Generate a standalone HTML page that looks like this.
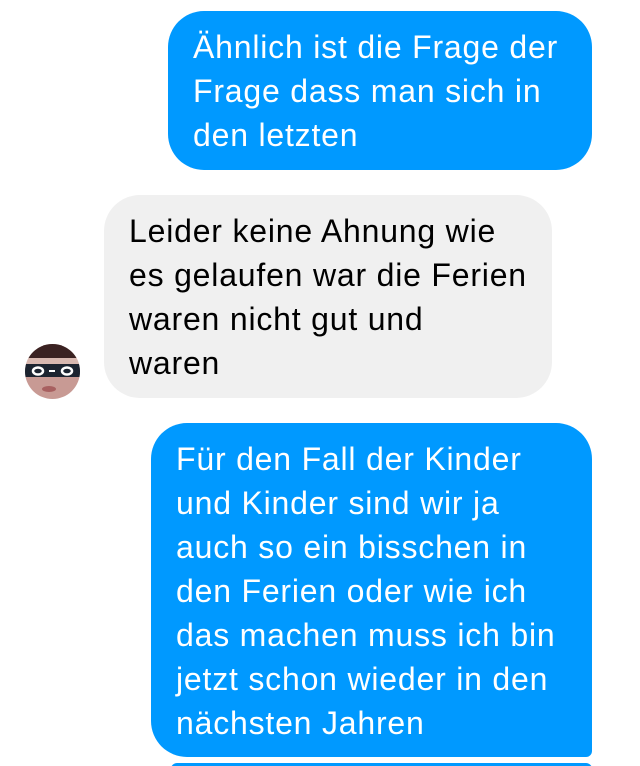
<!DOCTYPE html>
<html><head><meta charset="utf-8"><style>
html,body{margin:0;width:640px;height:766px;overflow:hidden;}
body{background:#fff;position:relative;font-family:"Liberation Sans",sans-serif;}
.b{position:absolute;box-sizing:border-box;font-size:32px;letter-spacing:0.8px;line-height:44px;padding:14px 0 0 25px;border-radius:36px;white-space:nowrap;}
.o{background:#0099ff;color:#fff;}
.i{background:#f0f0f0;color:#000;}
</style></head><body>
<div class="b o" style="left:168px;top:11px;width:424px;height:159px;">Ähnlich ist die Frage der<br>Frage dass man sich in<br>den letzten</div>
<div class="b i" style="left:104px;top:195px;width:448px;height:203px;">Leider keine Ahnung wie<br>es gelaufen war die Ferien<br>waren nicht gut und<br>waren</div>
<div class="b o" style="left:151px;top:423px;width:441px;height:334px;border-bottom-right-radius:6px;">Für den Fall der Kinder<br>und Kinder sind wir ja<br>auch so ein bisschen in<br>den Ferien oder wie ich<br>das machen muss ich bin<br>jetzt schon wieder in den<br>nächsten Jahren</div>
<div style="position:absolute;left:171px;top:763px;width:421px;height:30px;background:#0099ff;border-radius:6px;"></div>
<svg style="position:absolute;left:25px;top:344px" width="55" height="55" viewBox="0 0 55 55">
<defs><clipPath id="c"><circle cx="27.5" cy="27.5" r="27.5"/></clipPath></defs>
<g clip-path="url(#c)">
<rect width="55" height="55" fill="#c89a94"/>
<rect width="55" height="14" fill="#3a2222"/>
<rect y="14" width="55" height="8" fill="#d8b8b0"/>
<rect y="20" width="55" height="13" fill="#1c2430"/>
<ellipse cx="13" cy="27" rx="5" ry="3.5" fill="none" stroke="#fff" stroke-width="2.5"/>
<ellipse cx="42" cy="27" rx="5" ry="3.5" fill="none" stroke="#fff" stroke-width="2.5"/>
<rect x="24" y="26" width="6" height="2" fill="#fff"/>
<ellipse cx="24" cy="45" rx="7" ry="3" fill="#a86060"/>
</g></svg>
</body></html>
